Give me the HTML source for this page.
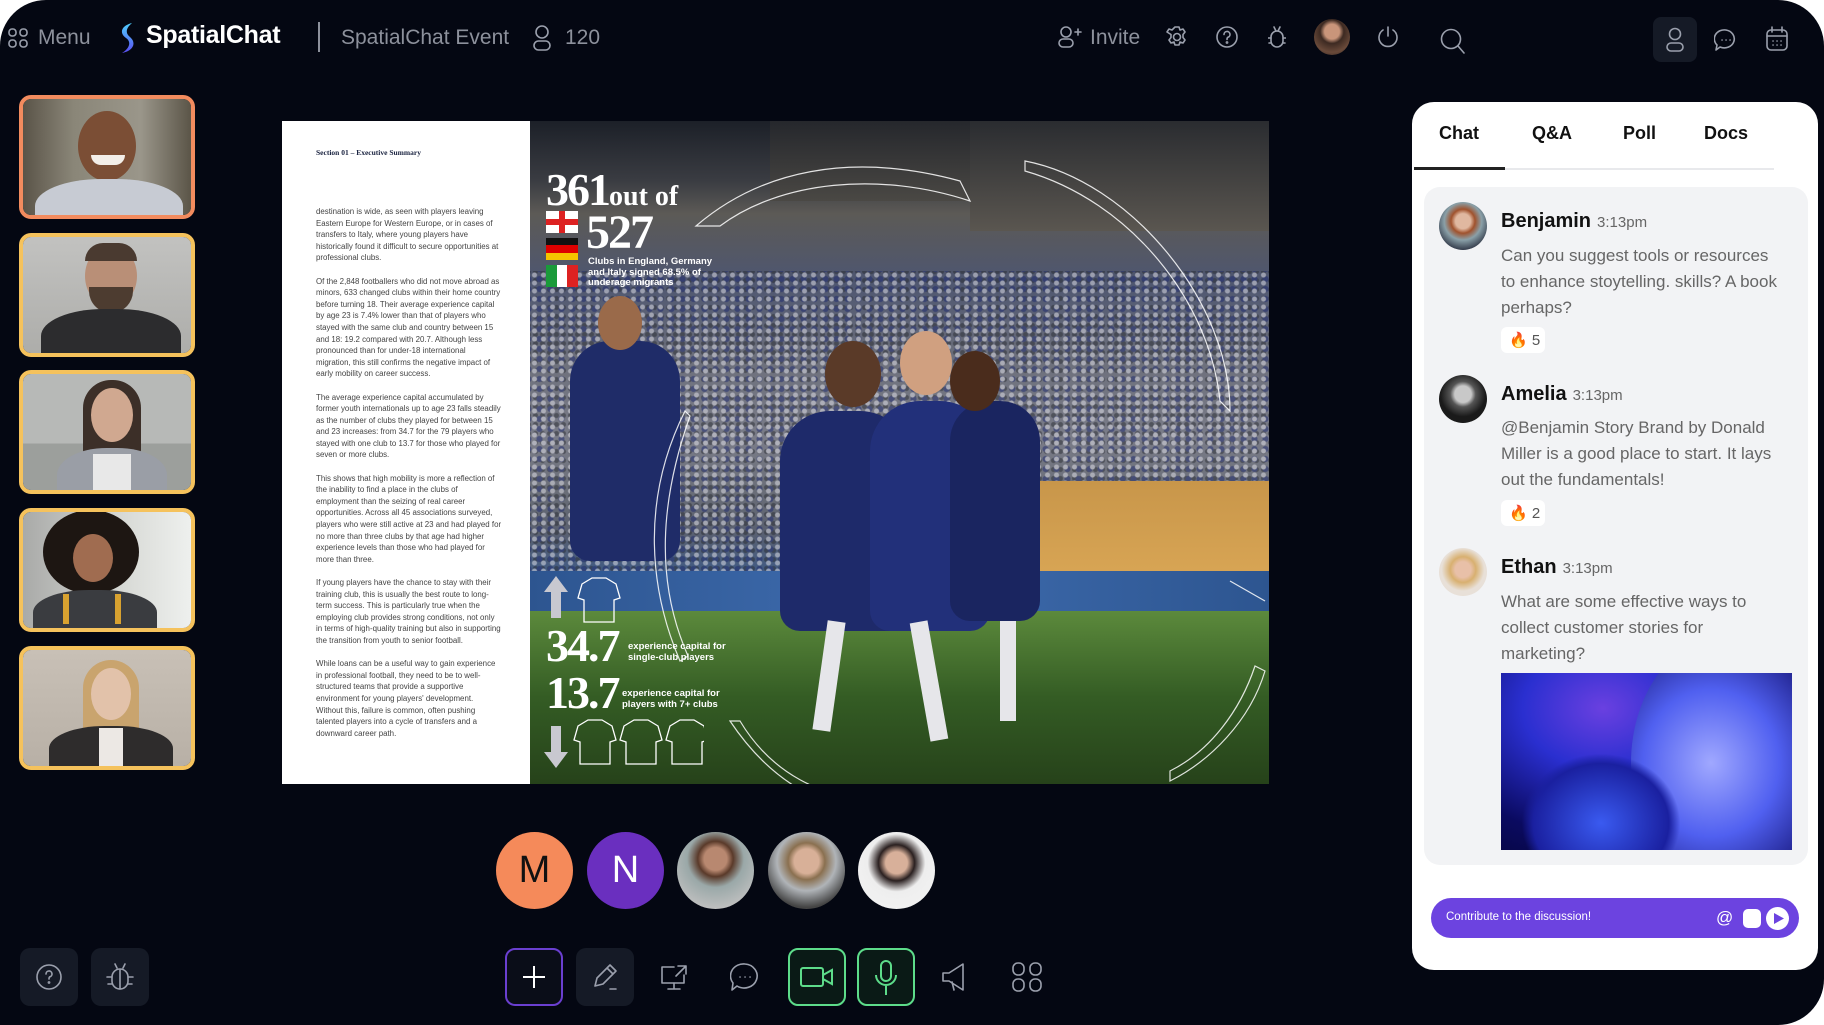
<!DOCTYPE html>
<html><head><meta charset="utf-8"><style>
*{margin:0;padding:0;box-sizing:border-box}
body{width:1824px;height:1025px;background:#fff;overflow:hidden;font-family:"Liberation Sans",sans-serif}
#app{position:absolute;left:0;top:0;width:1824px;height:1025px;background:#040712;border-radius:46px 46px 46px 0;overflow:hidden}
.abs{position:absolute}
.ic{position:absolute;stroke:#9ba0ad;fill:none;stroke-width:1.6;stroke-linecap:round;stroke-linejoin:round}
.tile{position:absolute;left:19px;width:176px;height:124px;border:4px solid #f5c25c;border-radius:12px;overflow:hidden}
.tile .bg{position:absolute;inset:0}
.face{position:absolute;border-radius:50%}
.body{position:absolute;border-radius:45% 45% 0 0}
.pg{position:absolute;left:35px;width:186px;font-size:7.9px;line-height:11.6px;color:#444}
.tab{position:absolute;top:123px;font-size:18px;font-weight:bold;color:#111}
.name{position:absolute;left:1501px;font-size:20px;color:#111;font-weight:bold}
.name span{font-size:15px;color:#666;font-weight:normal;margin-left:6px}
.msg{position:absolute;left:1501px;width:300px;font-size:17px;line-height:26px;color:#666;white-space:nowrap}
.rx{position:absolute;left:1501px;width:44px;height:26px;background:#fff;border-radius:6px;font-size:15px;color:#555;padding:4px 0 0 8px}
.av{position:absolute;left:1439px;width:48px;height:48px;border-radius:50%;overflow:hidden}
.pav{position:absolute;top:832px;width:77px;height:77px;border-radius:50%;overflow:hidden}
.btn{position:absolute;top:948px;width:58px;height:58px;border-radius:10px}
</style></head><body><div id="app">

<!-- top bar -->
<svg class="ic" style="left:8px;top:28px" width="20" height="20" viewBox="0 0 20 20"><rect x="1" y="1" width="7" height="7" rx="3"/><rect x="12" y="1" width="7" height="7" rx="3"/><rect x="1" y="12" width="7" height="7" rx="3"/><rect x="12" y="12" width="7" height="7" rx="3"/></svg>
<div class="abs" style="left:38px;top:26px;font-size:21px;color:#8d919c">Menu</div>
<svg class="abs" style="left:117px;top:22px" width="22" height="32" viewBox="0 0 22 32"><defs><linearGradient id="lg" x1="0" y1="0" x2="0" y2="1"><stop offset="0" stop-color="#4fd0ff"/><stop offset="1" stop-color="#5a4cf0"/></linearGradient></defs><path d="M15 1 C4 4 2 11 9 16 C15 20 12 27 5 31 C16 29 20 21 13 15 C8 11 9 6 15 1Z" fill="url(#lg)"/></svg>
<div class="abs" style="left:146px;top:21px;font-size:25px;font-weight:bold;color:#fff;letter-spacing:-0.3px">SpatialChat</div>
<div class="abs" style="left:318px;top:22px;width:2px;height:30px;background:#8d919c"></div>
<div class="abs" style="left:341px;top:26px;font-size:21px;color:#8d919c">SpatialChat Event</div>
<svg class="ic" style="left:532px;top:24px" width="20" height="28" viewBox="0 0 20 28"><circle cx="10" cy="8" r="6"/><rect x="2" y="17" width="16" height="9" rx="4.5"/></svg>
<div class="abs" style="left:565px;top:26px;font-size:21px;color:#8d919c">120</div>

<svg class="ic" style="left:1058px;top:26px" width="24" height="22" viewBox="0 0 24 22"><circle cx="8" cy="6" r="5"/><rect x="1" y="13" width="14" height="8" rx="4"/><path d="M17 6h6M20 3v6"/></svg>
<div class="abs" style="left:1090px;top:26px;font-size:21px;color:#8d919c">Invite</div>
<svg class="ic" style="left:1166px;top:26px" width="22" height="22" viewBox="0 0 22 22"><circle cx="11" cy="11" r="3.5"/><path d="M9 1h4l1 3 3-1 2 3-2 2.5 0 3 2 2.5-2 3-3-1-1 3h-4l-1-3-3 1-2-3 2-2.5v-3L1 6l2-3 3 1z"/></svg>
<svg class="ic" style="left:1216px;top:26px" width="22" height="22" viewBox="0 0 22 22"><circle cx="11" cy="11" r="10"/><path d="M8 8.5a3 3 0 1 1 4 2.8c-1 .4-1 1-1 2.2"/><circle cx="11" cy="16.5" r=".6"/></svg>
<svg class="ic" style="left:1268px;top:25px" width="18" height="24" viewBox="0 0 18 24"><path d="M6 2l2 4M12 2l-2 4"/><rect x="3" y="6" width="12" height="16" rx="6"/><path d="M3 13H0M15 13h3M3 18H1M15 18h2"/></svg>
<div class="abs" style="left:1314px;top:19px;width:36px;height:36px;border-radius:50%;background:radial-gradient(circle at 50% 35%,#c9957a 0 25%,#3d2a22 40%,#6a4a3a 70%,#2a201c)"></div>
<svg class="ic" style="left:1377px;top:26px" width="22" height="22" viewBox="0 0 22 22"><path d="M11 1v9"/><path d="M6 4a9 9 0 1 0 10 0"/></svg>
<svg class="ic" style="left:1440px;top:28px" width="26" height="26" viewBox="0 0 26 26"><circle cx="11" cy="11" r="9.5"/><path d="M18 18l6 7"/></svg>
<div class="abs" style="left:1653px;top:17px;width:44px;height:45px;border-radius:8px;background:#151a26"></div>
<svg class="ic" style="left:1664px;top:27px" width="22" height="26" viewBox="0 0 22 26"><circle cx="11" cy="7" r="5.5"/><rect x="3" y="16" width="16" height="8" rx="4"/></svg>
<svg class="ic" style="left:1714px;top:28px" width="24" height="24" viewBox="0 0 24 24"><path d="M12 2a10 9 0 1 1-6 17l-4 3 1-5A10 9 0 0 1 12 2z"/><path d="M8 12h.1M12 12h.1M16 12h.1"/></svg>
<svg class="ic" style="left:1766px;top:26px" width="22" height="26" viewBox="0 0 22 26"><rect x="1" y="4" width="20" height="20" rx="4"/><path d="M1 10h20M6 1v5M16 1v5M7 15h.1M11 15h.1M15 15h.1M7 19h.1M11 19h.1M15 19h.1"/></svg>

<!-- left tiles -->
<div class="tile" style="top:95px;border-color:#f28b5e"><div class="bg" style="background:linear-gradient(90deg,#5a5448,#8a8678 30%,#9a968a 70%,#5b5548)"></div><div class="face" style="left:55px;top:12px;width:58px;height:70px;background:#7b4e35"></div><div class="abs" style="left:68px;top:56px;width:34px;height:10px;border-radius:0 0 10px 10px;background:#f3eee8"></div><div class="body" style="left:12px;top:80px;width:148px;height:60px;background:#c7cbd3"></div></div>
<div class="tile" style="top:233px"><div class="bg" style="background:linear-gradient(#c2c2c0,#adadaa)"></div><div class="face" style="left:62px;top:8px;width:52px;height:62px;background:#b98f77"></div><div class="abs" style="left:62px;top:6px;width:52px;height:18px;border-radius:26px 26px 0 0;background:#4a3a30"></div><div class="abs" style="left:66px;top:50px;width:44px;height:26px;border-radius:0 0 22px 22px;background:#4d3c30"></div><div class="body" style="left:18px;top:72px;width:140px;height:60px;background:#2c2c2e"></div></div>
<div class="tile" style="top:370px"><div class="bg" style="background:linear-gradient(#b7b9b7 0 60%,#9c9f9c 60%)"></div><div class="abs" style="left:60px;top:6px;width:58px;height:80px;border-radius:28px 28px 10px 10px;background:#3c2f28"></div><div class="face" style="left:68px;top:14px;width:42px;height:54px;background:#d0a890"></div><div class="body" style="left:34px;top:74px;width:110px;height:60px;background:#9a9ea6"></div><div class="abs" style="left:70px;top:80px;width:38px;height:40px;background:#e8e8e8"></div></div>
<div class="tile" style="top:508px"><div class="bg" style="background:linear-gradient(90deg,#a9aaa8,#d8dad6 60%,#eef0ee)"></div><div class="face" style="left:20px;top:-2px;width:96px;height:84px;background:#1d1612"></div><div class="face" style="left:50px;top:22px;width:40px;height:48px;background:#a06c50"></div><div class="body" style="left:10px;top:78px;width:124px;height:50px;background:#3a3c40"></div><div class="abs" style="left:40px;top:82px;width:6px;height:30px;background:#d8a230"></div><div class="abs" style="left:92px;top:82px;width:6px;height:30px;background:#d8a230"></div></div>
<div class="tile" style="top:646px"><div class="bg" style="background:linear-gradient(#c8c0b6,#b8b0a6)"></div><div class="abs" style="left:60px;top:10px;width:56px;height:110px;border-radius:28px 28px 6px 6px;background:#c9a46e"></div><div class="face" style="left:68px;top:18px;width:40px;height:52px;background:#e2c2aa"></div><div class="body" style="left:26px;top:76px;width:124px;height:50px;background:#2e2c2c"></div><div class="abs" style="left:76px;top:78px;width:24px;height:40px;background:#ece8e4"></div></div>

<!-- presentation -->
<div class="abs" style="left:282px;top:121px;width:248px;height:663px;background:#fff"></div>
<div class="abs" style="left:316px;top:148px;font-family:'Liberation Serif',serif;font-size:7.5px;color:#1a2340;font-weight:bold">Section 01 – Executive Summary</div>
<div class="pg" style="left:316px;top:206px">destination is wide, as seen with players leaving Eastern Europe for Western Europe, or in cases of transfers to Italy, where young players have historically found it difficult to secure opportunities at professional clubs.<br><br>Of the 2,848 footballers who did not move abroad as minors, 633 changed clubs within their home country before turning 18. Their average experience capital by age 23 is 7.4% lower than that of players who stayed with the same club and country between 15 and 18: 19.2 compared with 20.7. Although less pronounced than for under-18 international migration, this still confirms the negative impact of early mobility on career success.<br><br>The average experience capital accumulated by former youth internationals up to age 23 falls steadily as the number of clubs they played for between 15 and 23 increases: from 34.7 for the 79 players who stayed with one club to 13.7 for those who played for seven or more clubs.<br><br>This shows that high mobility is more a reflection of the inability to find a place in the clubs of employment than the seizing of real career opportunities. Across all 45 associations surveyed, players who were still active at 23 and had played for no more than three clubs by that age had higher experience levels than those who had played for more than three.<br><br>If young players have the chance to stay with their training club, this is usually the best route to long-term success. This is particularly true when the employing club provides strong conditions, not only in terms of high-quality training but also in supporting the transition from youth to senior football.<br><br>While loans can be a useful way to gain experience in professional football, they need to be to well-structured teams that provide a supportive environment for young players' development. Without this, failure is common, often pushing talented players into a cycle of transfers and a downward career path.</div>

<div class="abs" style="left:530px;top:121px;width:739px;height:663px;overflow:hidden;background:linear-gradient(180deg,#1c2028 0%,#3a3c42 9%,#5c5a56 14%,#4e5670 24%,#6d707c 36%,#7a7c88 48%,#6a6e78 56%,#5a6070 62%,#3a5a8a 70%,#2c4e80 72%,#4c7a38 74%,#3f6a2c 85%,#2c4a20 100%)">
  <div class="abs" style="left:0;top:150px;width:739px;height:300px;opacity:.5;background:radial-gradient(circle,#e6e6ee 0 2px,transparent 3px) 0 0/9px 8px,radial-gradient(circle,#1e2a70 0 2.5px,transparent 3.5px) 4px 3px/11px 10px,radial-gradient(circle,#2a2d33 0 2px,transparent 3px) 2px 5px/7px 9px"></div>
  <div class="abs" style="left:440px;top:0;width:300px;height:110px;background:linear-gradient(#2a2c30,#5a5650)"></div>
  <div class="abs" style="left:240px;top:0;width:200px;height:80px;background:linear-gradient(#25272c,#4a4844)"></div>
  <div class="abs" style="left:380px;top:360px;width:359px;height:100px;background:linear-gradient(#c8964a,#d9a655)"></div>
  <div class="abs" style="left:0;top:450px;width:739px;height:40px;background:linear-gradient(90deg,#2d5590,#3f6db0 50%,#2d5590)"></div>
  <div class="abs" style="left:0;top:490px;width:739px;height:173px;background:linear-gradient(#5c8a3c,#345c24 50%,#26421a)"></div>
  <!-- players -->
  <div class="abs" style="left:40px;top:220px;width:110px;height:220px;border-radius:40px 40px 20px 20px;background:#1f2c68"></div>
  <div class="face" style="left:68px;top:175px;width:44px;height:54px;background:#9a6a4a"></div>
  <div class="abs" style="left:250px;top:290px;width:130px;height:220px;border-radius:50px 50px 20px 20px;background:#1e2a6a"></div>
  <div class="face" style="left:295px;top:220px;width:56px;height:66px;background:#5a3a28"></div>
  <div class="abs" style="left:340px;top:280px;width:120px;height:230px;border-radius:50px 50px 20px 20px;background:#22307a"></div>
  <div class="face" style="left:370px;top:210px;width:52px;height:64px;background:#d0a080"></div>
  <div class="abs" style="left:420px;top:280px;width:90px;height:220px;border-radius:40px 40px 20px 20px;background:#1a2560"></div>
  <div class="face" style="left:420px;top:230px;width:50px;height:60px;background:#4a2c1c"></div>
  <div class="abs" style="left:290px;top:500px;width:18px;height:110px;background:#e6e6ea;transform:rotate(8deg)"></div>
  <div class="abs" style="left:390px;top:500px;width:18px;height:120px;background:#e6e6ea;transform:rotate(-10deg)"></div>
  <div class="abs" style="left:470px;top:500px;width:16px;height:100px;background:#e6e6ea"></div>
  <svg class="abs" style="left:0;top:0" width="739" height="663"><g fill="none" stroke="#fff" stroke-width="1.2" opacity=".85"><path d="M166 105 C230 50 320 30 430 60 L440 80 C350 50 250 60 190 105Z"/><path d="M495 40 C600 60 700 180 700 290 L690 280 C680 180 600 80 495 50Z"/><path d="M155 290 C110 380 120 470 150 540 L158 535 C125 460 130 380 160 295Z"/><path d="M200 600 C240 660 300 700 380 690 L360 680 C290 680 240 650 210 600Z"/><path d="M640 660 C680 640 720 600 735 550 L725 545 C710 590 680 630 640 650Z"/><path d="M700 460 L735 480"/></g></svg>
  <!-- overlay text -->
  <div class="abs" style="left:16px;top:42px;font-family:'Liberation Serif',serif;font-size:46px;font-weight:bold;color:#fff;letter-spacing:-2px">361<span style="font-size:28px;letter-spacing:0">out of</span></div>
  <div class="abs" style="left:16px;top:90px;width:32px;height:22px;background:#fff"></div><div class="abs" style="left:29px;top:90px;width:6px;height:22px;background:#d22"></div><div class="abs" style="left:16px;top:98px;width:32px;height:6px;background:#d22"></div>
  <div class="abs" style="left:16px;top:117px;width:32px;height:7px;background:#111"></div><div class="abs" style="left:16px;top:124px;width:32px;height:8px;background:#d00"></div><div class="abs" style="left:16px;top:132px;width:32px;height:7px;background:#f5c400"></div>
  <div class="abs" style="left:16px;top:144px;width:11px;height:22px;background:#1a9a3a"></div><div class="abs" style="left:27px;top:144px;width:10px;height:22px;background:#fff"></div><div class="abs" style="left:37px;top:144px;width:11px;height:22px;background:#d22"></div>
  <div class="abs" style="left:56px;top:84px;font-family:'Liberation Serif',serif;font-size:48px;font-weight:bold;color:#fff;letter-spacing:-2px">527</div>
  <div class="abs" style="left:58px;top:136px;font-size:9.5px;line-height:10.5px;font-weight:bold;color:#fff">Clubs in England, Germany<br>and Italy signed 68.5% of<br>underage migrants</div>
  <div class="abs" style="left:16px;top:498px;font-family:'Liberation Serif',serif;font-size:46px;font-weight:bold;color:#fff;letter-spacing:-2px">34.7</div>
  <div class="abs" style="left:98px;top:520px;font-size:9.5px;line-height:11px;font-weight:bold;color:#fff">experience capital for<br>single-club players</div>
  <div class="abs" style="left:16px;top:545px;font-family:'Liberation Serif',serif;font-size:46px;font-weight:bold;color:#fff;letter-spacing:-2px">13.7</div>
  <div class="abs" style="left:92px;top:567px;font-size:9.5px;line-height:11px;font-weight:bold;color:#fff">experience capital for<br>players with 7+ clubs</div>
  <svg class="abs" style="left:14px;top:455px" width="160" height="205" viewBox="0 0 160 205"><g fill="#c8c8d0"><path d="M12 0 L24 16 H17 V42 H7 V16 H0Z"/><path d="M7 150 H17 V176 H24 L12 192 L0 176 H7Z"/></g><g fill="none" stroke="#fff" stroke-width="1.3"><path d="M38 8 L48 2 H62 L72 8 L76 22 L70 24 V46 H40 V24 L34 22Z"/><path d="M34 150 L44 144 H58 L68 150 L72 164 L66 166 V188 H36 V166 L30 164Z"/><path d="M80 150 L90 144 H104 L114 150 L118 164 L112 166 V188 H82 V166 L76 164Z"/><path d="M126 150 L136 144 H150 L160 150 L164 164 L158 166 V188 H128 V166 L122 164Z"/></g></svg>
</div>

<!-- participant avatars -->
<div class="pav" style="left:496px;background:#f58a5a;color:#111;font-size:38px;text-align:center;line-height:77px">M</div>
<div class="pav" style="left:587px;background:#6a2fbf;color:#fff;font-size:38px;text-align:center;line-height:77px">N</div>
<div class="pav" style="left:677px;background:radial-gradient(circle at 50% 35%,#b88870 0 18%,#5a3a2a 28%,#9aa8a8 45%,#c0c0c0 80%)"></div>
<div class="pav" style="left:768px;background:radial-gradient(circle at 50% 38%,#d8b098 0 20%,#8a7050 30%,#b0b4b8 48%,#444 75%)"></div>
<div class="pav" style="left:858px;background:radial-gradient(circle at 50% 40%,#d8b09a 0 18%,#2a2020 30%,#eee 48%,#f4f4f4)"></div>

<!-- bottom left -->
<div class="btn" style="left:20px;background:#151a26"></div>
<svg class="ic" style="left:36px;top:964px" width="26" height="26" viewBox="0 0 26 26"><circle cx="13" cy="13" r="12"/><path d="M10 10a3 3 0 1 1 4 2.8c-1 .4-1 1-1 2.2"/><circle cx="13" cy="18.5" r=".6"/></svg>
<div class="btn" style="left:91px;background:#151a26"></div>
<svg class="ic" style="left:106px;top:962px" width="28" height="30" viewBox="0 0 28 30"><path d="M9 2l2 4M19 2l-2 4"/><rect x="6" y="7" width="16" height="20" rx="8"/><path d="M6 15H1M22 15h5M6 22H2M22 22h4M14 8v19"/></svg>

<!-- toolbar -->
<div class="btn" style="left:505px;border:2px solid #6a3fd0;background:#0a0d18"></div>
<svg class="abs" style="left:522px;top:965px" width="24" height="24"><path d="M12 1v22M1 12h22" stroke="#fff" stroke-width="2"/></svg>
<div class="btn" style="left:576px;background:#151a26"></div>
<svg class="ic" style="left:590px;top:962px" width="30" height="30" viewBox="0 0 30 30"><path d="M5 24 L7 16 L20 3 L26 9 L13 22Z M17 6l6 6M20 27h6"/></svg>
<svg class="ic" style="left:659px;top:964px" width="30" height="28" viewBox="0 0 30 28"><path d="M15 3H3v16h22v-8"/><path d="M19 2h8v8M27 2l-10 10M9 25h12M15 19v6"/></svg>
<svg class="ic" style="left:730px;top:962px" width="30" height="30" viewBox="0 0 30 30"><path d="M15 2a13 12 0 1 1-8 22l-5 4 1-7A13 12 0 0 1 15 2z"/><path d="M10 15h.1M15 15h.1M20 15h.1"/></svg>
<div class="btn" style="left:788px;border:2px solid #5ddc8a;background:#0a1a16"></div>
<svg class="abs" style="left:800px;top:966px" width="34" height="22" fill="none" stroke="#5ddc8a" stroke-width="2"><rect x="1" y="2" width="22" height="18" rx="2"/><path d="M23 9l9-5v14l-9-5"/></svg>
<div class="btn" style="left:857px;border:2px solid #5ddc8a;background:#0a1a16"></div>
<svg class="abs" style="left:874px;top:960px" width="24" height="36" fill="none" stroke="#5ddc8a" stroke-width="2"><rect x="7" y="1" width="10" height="20" rx="5"/><path d="M2 15a10 10 0 0 0 20 0M12 25v10"/></svg>
<svg class="ic" style="left:940px;top:962px" width="34" height="30" viewBox="0 0 34 30"><path d="M3 11v8h6l14 9V2L9 11z"/><path d="M12 20l2 8"/></svg>
<svg class="ic" style="left:1012px;top:962px" width="30" height="30" viewBox="0 0 30 30"><rect x="1" y="1" width="11" height="12" rx="5"/><rect x="18" y="1" width="11" height="12" rx="5"/><rect x="1" y="17" width="11" height="12" rx="5"/><rect x="18" y="17" width="11" height="12" rx="5"/></svg>

<!-- chat panel -->
<div class="abs" style="left:1412px;top:102px;width:406px;height:868px;background:#fff;border-radius:22px"></div>
<div class="tab" style="left:1439px">Chat</div><div class="tab" style="left:1532px">Q&amp;A</div><div class="tab" style="left:1623px">Poll</div><div class="tab" style="left:1704px">Docs</div>
<div class="abs" style="left:1414px;top:168px;width:360px;height:2px;background:#e8e9ec"></div>
<div class="abs" style="left:1414px;top:167px;width:91px;height:3px;background:#222"></div>
<div class="abs" style="left:1424px;top:187px;width:384px;height:678px;background:#f2f3f5;border-radius:16px"></div>

<div class="av" style="top:202px;background:radial-gradient(circle at 50% 40%,#e0b8a0 0 20%,#a0522d 32%,#8aa0a8 50%,#2a3040 80%)"></div>
<div class="name" style="top:210px">Benjamin<span>3:13pm</span></div>
<div class="msg" style="top:243px">Can you suggest tools or resources<br>to enhance stoytelling. skills? A book<br>perhaps?</div>
<div class="rx" style="top:327px">🔥 5</div>

<div class="av" style="top:375px;background:radial-gradient(circle at 50% 40%,#c8c8c8 0 22%,#555 34%,#1a1a1a 60%)"></div>
<div class="name" style="top:383px">Amelia<span>3:13pm</span></div>
<div class="msg" style="top:415px">@Benjamin Story Brand by Donald<br>Miller is a good place to start. It lays<br>out the fundamentals!</div>
<div class="rx" style="top:500px">🔥 2</div>

<div class="av" style="top:548px;background:radial-gradient(circle at 50% 45%,#e8c0a8 0 22%,#d8b070 36%,#e8e0d8 60%)"></div>
<div class="name" style="top:556px">Ethan<span>3:13pm</span></div>
<div class="msg" style="top:589px">What are some effective ways to<br>collect customer stories for<br>marketing?</div>
<div class="abs" style="left:1501px;top:673px;width:291px;height:177px;overflow:hidden;background:radial-gradient(ellipse at 35% 20%,#6a40e0 0,#2a2fd0 30%,#0a0a60 65%,#050530 100%)"><div class="abs" style="left:130px;top:-40px;width:200px;height:260px;border-radius:50%;background:radial-gradient(ellipse at 40% 50%,#a0a8ff,#5060f0 40%,#1a1a80 75%,transparent 76%)"></div><div class="abs" style="left:20px;top:80px;width:160px;height:140px;border-radius:50%;background:radial-gradient(#3a5af0,#1a20a0 60%,transparent 70%)"></div></div>

<div class="abs" style="left:1431px;top:898px;width:368px;height:40px;border-radius:20px;background:#6c43e0"></div>
<div class="abs" style="left:1446px;top:911px;font-size:11.5px;color:#fff">Contribute to the discussion!</div>
<div class="abs" style="left:1716px;top:908px;font-size:17px;color:#fff">@</div>
<div class="abs" style="left:1743px;top:909px;width:18px;height:19px;border-radius:5px;background:#fff"></div>
<div class="abs" style="left:1766px;top:907px;width:23px;height:23px;border-radius:50%;background:#fff"></div>
<svg class="abs" style="left:1773px;top:912px" width="12" height="13"><path d="M1 1L11 6.5 1 12z" fill="#6c43e0"/></svg>
</div></body></html>
